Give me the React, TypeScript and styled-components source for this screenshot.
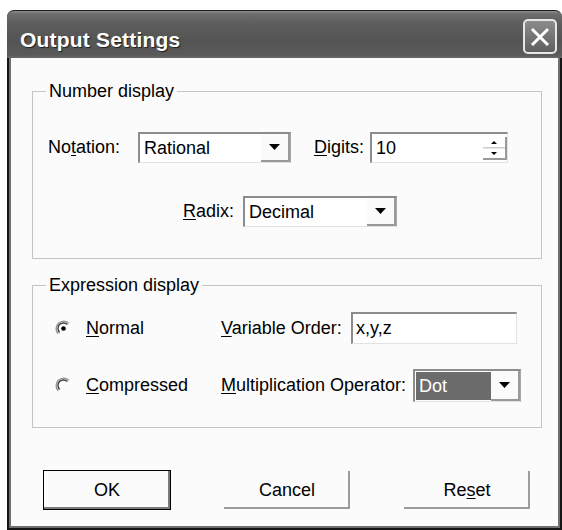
import React from "react";
import styled, { createGlobalStyle, css } from "styled-components";

const GlobalStyle = createGlobalStyle`
  html, body {
    margin: 0;
    padding: 0;
    background: #ffffff;
  }
  body {
    font-family: "Liberation Sans", Arial, sans-serif;
  }
`;

const Arrow = () => (
  <svg width="11" height="6" viewBox="0 0 11 6">
    <path d="M0 0 H11 L5.5 6 Z" fill="#000" />
  </svg>
);

const SpinArrows = () => (
  <svg width="26" height="26" viewBox="0 0 26 26">
    <path d="M10 9 H16 L13 6 Z" fill="#000" />
    <path d="M2 13 H24" stroke="#9a9a9a" strokeWidth="1" />
    <path d="M2 14 H24" stroke="#ffffff" strokeWidth="1" />
    <path d="M10 17 H16 L13 20 Z" fill="#000" />
    <path d="M25 2 V24 H2" stroke="#9a9a9a" strokeWidth="2" fill="none" />
  </svg>
);

// classic radio: only the shaded upper-left rim shows on a light face
const Radio = ({ checked }: { checked?: boolean }) => (
  <svg width="17" height="17" viewBox="0 0 17 17">
    <path d="M3.2 13.8 A7.5 7.5 0 0 1 13.8 3.2" stroke="#9a9a9a" strokeWidth="1.5" fill="none" />
    <path d="M4.6 12.4 A5.5 5.5 0 0 1 12.4 4.6" stroke="#404040" strokeWidth="1.4" fill="none" />
    {checked && <circle cx="8.5" cy="8.5" r="2.3" fill="#000" />}
  </svg>
);

const App = () => {
  return (
    <>
      <GlobalStyle />
      <Window>
        <TitleBar>
          <Title>Output Settings</Title>
          <CloseButton>
            <svg width="22" height="22" viewBox="0 0 22 22">
              <path d="M3 3 L19 19 M19 3 L3 19" stroke="#fff" strokeWidth="3" />
            </svg>
          </CloseButton>
        </TitleBar>

        <Frame>
          <Group>
            <Legend>Number display</Legend>
            <NumberBody>
              <Row $indent={15}>
                <Label $width={90}>
                  No<U>t</U>ation:
                </Label>
                <Combo $width={153}>
                  <ComboValue>Rational</ComboValue>
                  <DropButton>
                    <Arrow />
                  </DropButton>
                </Combo>
                <Label $width={56} style={{ marginLeft: 23 }}>
                  <U>D</U>igits:
                </Label>
                <Spin>
                  <ComboValue>10</ComboValue>
                  <SpinArrows />
                </Spin>
              </Row>
              <Row $indent={150}>
                <Label $width={60}>
                  <U>R</U>adix:
                </Label>
                <Combo $width={154}>
                  <ComboValue>Decimal</ComboValue>
                  <DropButton>
                    <Arrow />
                  </DropButton>
                </Combo>
              </Row>
            </NumberBody>
          </Group>

          <Group $spaced>
            <Legend>Expression display</Legend>
            <ExpressionBody>
              <Row $indent={22} $height={32}>
                <Choice>
                  <Radio checked />
                  <span>
                    <U>N</U>ormal
                  </span>
                </Choice>
                <Label $width={130}>
                  <U>V</U>ariable Order:
                </Label>
                <TextField>x,y,z</TextField>
              </Row>
              <Row $indent={22} $height={33}>
                <Choice>
                  <Radio />
                  <span>
                    <U>C</U>ompressed
                  </span>
                </Choice>
                <Label $width={192}>
                  <U>M</U>ultiplication Operator:
                </Label>
                <Combo $width={108}>
                  <ComboValue $selected>Dot</ComboValue>
                  <DropButton>
                    <Arrow />
                  </DropButton>
                </Combo>
              </Row>
            </ExpressionBody>
          </Group>

          <ButtonRow>
            <PushButton $default>OK</PushButton>
            <PushButton>Cancel</PushButton>
            <PushButton>
              Re<U>s</U>et
            </PushButton>
          </ButtonRow>
        </Frame>
      </Window>
    </>
  );
};

export default App;

const Window = styled.div`
  box-sizing: border-box;
  margin: 10px 0 0 7px;
  width: 555px;
  height: 520px;
  display: flex;
  flex-direction: column;
`;

const TitleBar = styled.div`
  box-sizing: border-box;
  height: 48px;
  flex-shrink: 0;
  display: flex;
  align-items: center;
  justify-content: space-between;
  padding: 10px 5px 0 13px;
  border-top: 1px solid #1c1c1c;
  border-radius: 7px 7px 0 0;
  background: linear-gradient(
    to bottom,
    #8e8e8e 0px,
    #6c6c6c 3px,
    #5e5e5e 12px,
    #545454 30px,
    #5a5a5a 44px,
    #6a6a6a 47px
  );
`;

const Title = styled.span`
  color: #ffffff;
  font-weight: bold;
  font-size: 21px;
  letter-spacing: 0.2px;
  text-shadow: 1px 1px 1px #1e1e1e;
`;

const CloseButton = styled.div`
  box-sizing: border-box;
  width: 34px;
  height: 35px;
  margin-bottom: 6px;
  display: flex;
  align-items: center;
  justify-content: center;
  border: 2px solid #e6e6e6;
  border-radius: 5px;
  background: linear-gradient(to bottom, #8c8c8c, #5e5e5e);
`;

const Frame = styled.div`
  flex: 1;
  display: flex;
  flex-direction: column;
  border: 2px solid #151515;
  border-top: 0;
  padding: 23px 18px 0 23px;
  background: #fbfbfb;
  box-shadow: inset 2px 0 #707070, inset -2px 0 #707070, inset 0 -2px #707070;
`;

const Group = styled.fieldset<{ $spaced?: boolean }>`
  margin: ${({ $spaced }) => ($spaced ? "16px" : "0")} 0 0 0;
  padding: 0;
  min-width: 0;
  border: 1px solid #c4c4c4;
`;

const Legend = styled.legend`
  margin-left: 13px;
  padding: 0 3px;
  font-size: 18px;
  line-height: 20px;
  color: #000;
`;

const NumberBody = styled.div`
  display: flex;
  flex-direction: column;
  gap: 33px;
  padding: 31px 0 31px 0;
`;

const ExpressionBody = styled.div`
  display: flex;
  flex-direction: column;
  gap: 25px;
  padding: 17px 0 25px 0;
`;

const Row = styled.div<{ $indent: number; $height?: number }>`
  display: flex;
  align-items: center;
  height: ${({ $height }) => $height ?? 31}px;
  padding-left: ${({ $indent }) => $indent}px;
`;

const Label = styled.span<{ $width: number }>`
  flex-shrink: 0;
  width: ${({ $width }) => $width}px;
  font-size: 18px;
  color: #000;
  white-space: nowrap;
`;

const U = styled.span`
  text-decoration: underline;
  text-underline-offset: 2px;
`;

const sunken = css`
  box-sizing: border-box;
  height: 100%;
  display: flex;
  align-items: stretch;
  background: #ffffff;
  border-top: 2px solid #8c8c8c;
  border-left: 2px solid #8c8c8c;
  border-right: 1px solid #e2e2e2;
  border-bottom: 1px solid #e2e2e2;
`;

const Combo = styled.div<{ $width: number }>`
  ${sunken};
  width: ${({ $width }) => $width}px;
  border-right: 1px solid #a8a8a8;
`;

const Spin = styled.div`
  ${sunken};
  width: 138px;
  align-items: center;
`;

const ComboValue = styled.span<{ $selected?: boolean }>`
  flex: 1;
  display: flex;
  align-items: center;
  padding-left: 3px;
  margin: 1px 0 1px 1px;
  font-size: 18px;
  color: ${({ $selected }) => ($selected ? "#ffffff" : "#000")};
  background: ${({ $selected }) => ($selected ? "#6c6c6c" : "transparent")};
`;

const DropButton = styled.span`
  box-sizing: border-box;
  width: 29px;
  display: flex;
  align-items: center;
  justify-content: center;
  background: #fbfbfb;
  border-right: 2px solid #9a9a9a;
  border-bottom: 2px solid #9a9a9a;
`;

const TextField = styled.div`
  ${sunken};
  width: 166px;
  align-items: center;
  padding-left: 3px;
  font-size: 18px;
  color: #000;
`;

const Choice = styled.div`
  width: 166px;
  flex-shrink: 0;
  display: flex;
  align-items: center;
  gap: 14px;
  font-size: 18px;
  color: #000;
`;

const ButtonRow = styled.div`
  display: flex;
  gap: 52px;
  margin-top: 42px;
  padding-left: 11px;
`;

const PushButton = styled.button<{ $default?: boolean }>`
  box-sizing: border-box;
  width: 128px;
  height: 40px;
  padding: 0;
  font-family: "Liberation Sans", Arial, sans-serif;
  font-size: 18px;
  color: #000;
  background: #fbfbfb;
  border: 1px solid transparent;
  box-shadow: inset -2px -2px #9c9c9c;

  ${({ $default }) =>
    $default &&
    css`
      border: 1px solid #000;
      box-shadow: inset -2px -2px #7a7a7a;
    `}
`;
